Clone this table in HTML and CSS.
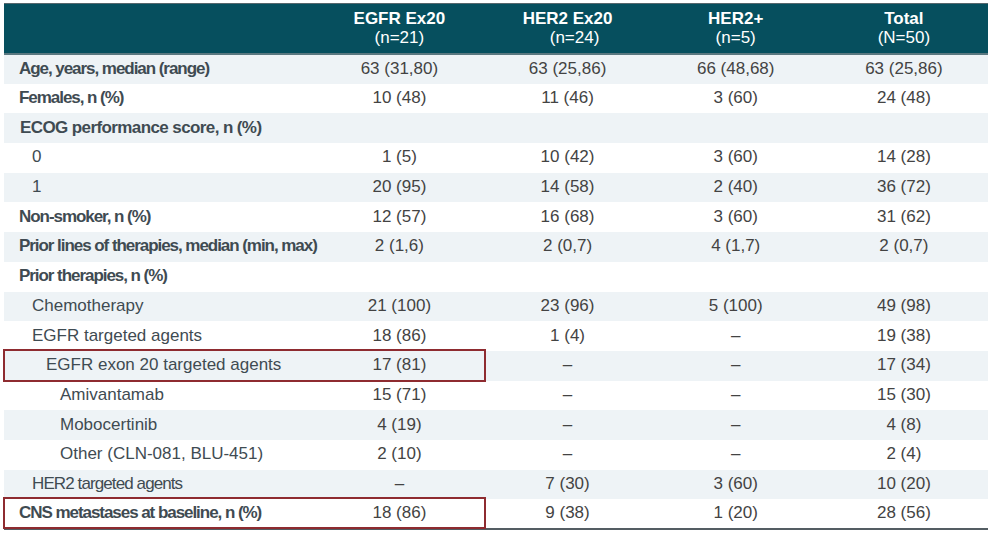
FILE: index.html
```html
<!DOCTYPE html>
<html>
<head>
<meta charset="utf-8">
<link rel="stylesheet" href="styles.css">
</head>
<body>
<div class="wrap">
<table class="tbl">
  <colgroup>
    <col class="c-label"><col class="c-val"><col class="c-val"><col class="c-val"><col class="c-val">
  </colgroup>
  <thead>
    <tr>
      <th></th>
      <th><b>EGFR Ex20</b><br><span>(n=21)</span></th>
      <th><b>HER2 Ex20</b><br><span class="sh">(n=24)</span></th>
      <th><b>HER2+</b><br><span>(n=5)</span></th>
      <th><b>Total</b><br><span>(N=50)</span></th>
    </tr>
  </thead>
  <tbody>
    <tr class="s"><td class="lb">Age, years, median (range)</td><td>63 (31,80)</td><td>63 (25,86)</td><td>66 (48,68)</td><td>63 (25,86)</td></tr>
    <tr><td class="lb">Females, n (%)</td><td>10 (48)</td><td>11 (46)</td><td>3 (60)</td><td>24 (48)</td></tr>
    <tr class="s"><td class="lb wide">ECOG performance score, n (%)</td><td></td><td></td><td></td><td></td></tr>
    <tr><td class="i1">0</td><td>1 (5)</td><td>10 (42)</td><td>3 (60)</td><td>14 (28)</td></tr>
    <tr class="s"><td class="i1">1</td><td>20 (95)</td><td>14 (58)</td><td>2 (40)</td><td>36 (72)</td></tr>
    <tr><td class="lb">Non-smoker, n (%)</td><td>12 (57)</td><td>16 (68)</td><td>3 (60)</td><td>31 (62)</td></tr>
    <tr class="s"><td class="lb">Prior lines of therapies, median (min, max)</td><td>2 (1,6)</td><td>2 (0,7)</td><td>4 (1,7)</td><td>2 (0,7)</td></tr>
    <tr><td class="lb">Prior therapies, n (%)</td><td></td><td></td><td></td><td></td></tr>
    <tr class="s"><td class="i1">Chemotherapy</td><td>21 (100)</td><td>23 (96)</td><td>5 (100)</td><td>49 (98)</td></tr>
    <tr><td class="i1">EGFR targeted agents</td><td>18 (86)</td><td>1 (4)</td><td>–</td><td>19 (38)</td></tr>
    <tr class="s hl"><td class="i2"><span class="box"></span>EGFR exon 20 targeted agents</td><td>17 (81)</td><td>–</td><td>–</td><td>17 (34)</td></tr>
    <tr><td class="i3">Amivantamab</td><td>15 (71)</td><td>–</td><td>–</td><td>15 (30)</td></tr>
    <tr class="s"><td class="i3">Mobocertinib</td><td>4 (19)</td><td>–</td><td>–</td><td>4 (8)</td></tr>
    <tr><td class="i3">Other (CLN-081, BLU-451)</td><td>2 (10)</td><td>–</td><td>–</td><td>2 (4)</td></tr>
    <tr class="s"><td class="i1 tight">HER2 targeted agents</td><td>–</td><td>7 (30)</td><td>3 (60)</td><td>10 (20)</td></tr>
    <tr class="hl last"><td class="lb"><span class="box"></span>CNS metastases at baseline, n (%)</td><td>18 (86)</td><td>9 (38)</td><td>1 (20)</td><td>28 (56)</td></tr>
  </tbody>
</table>
</div>
</body>
</html>
```
FILE: styles.css
```css
html, body {
  margin: 0;
  padding: 0;
  background: #ffffff;
}
body {
  font-family: "Liberation Sans", Arial, sans-serif;
}
.wrap {
  padding: 3px 4px 0 4px;
  width: 984px;
}
.tbl {
  width: 984px;
  border-collapse: collapse;
  table-layout: fixed;
}
.c-label { width: 311px; }
.c-val { width: 168px; }

thead tr {
  background: #064f5e;
  border-top: 1px solid #56676d;
  border-bottom: 2px solid #5a7880;
}
thead th {
  height: 48px;
  padding: 0 0 1px 0;
  color: #ffffff;
  font-size: 17px;
  line-height: 19px;
  text-align: center;
  vertical-align: middle;
}
thead th b { font-weight: bold; }
thead th span { font-weight: normal; }
thead th span.sh { padding-left: 14px; }

tbody tr { height: 29.7px; }
tbody tr.s { background: #eef3f6; }
tbody td {
  padding: 0 0 1px 0;
  font-size: 17px;
  color: #434343;
  text-align: center;
  vertical-align: middle;
  white-space: nowrap;
}
tbody td.lb, tbody td.i1, tbody td.i2, tbody td.i3 {
  text-align: left;
  color: #3f4b52;
  position: relative;
}
td.lb {
  padding-left: 15px;
  font-weight: bold;
  letter-spacing: -1.05px;
}
td.lb.wide { padding-left: 16px; letter-spacing: -0.6px; }
td.i1 { padding-left: 28px; }
td.i1.tight { letter-spacing: -0.9px; }
td.i2 { padding-left: 42px; }
td.i3 { padding-left: 56px; }

tr.last { border-bottom: 2px solid #545d63; }

.box {
  position: absolute;
  left: -1px;
  top: -2px;
  bottom: -1px;
  width: 483px;
  border: 2px solid #8e2b30;
  box-sizing: border-box;
  pointer-events: none;
}
```
